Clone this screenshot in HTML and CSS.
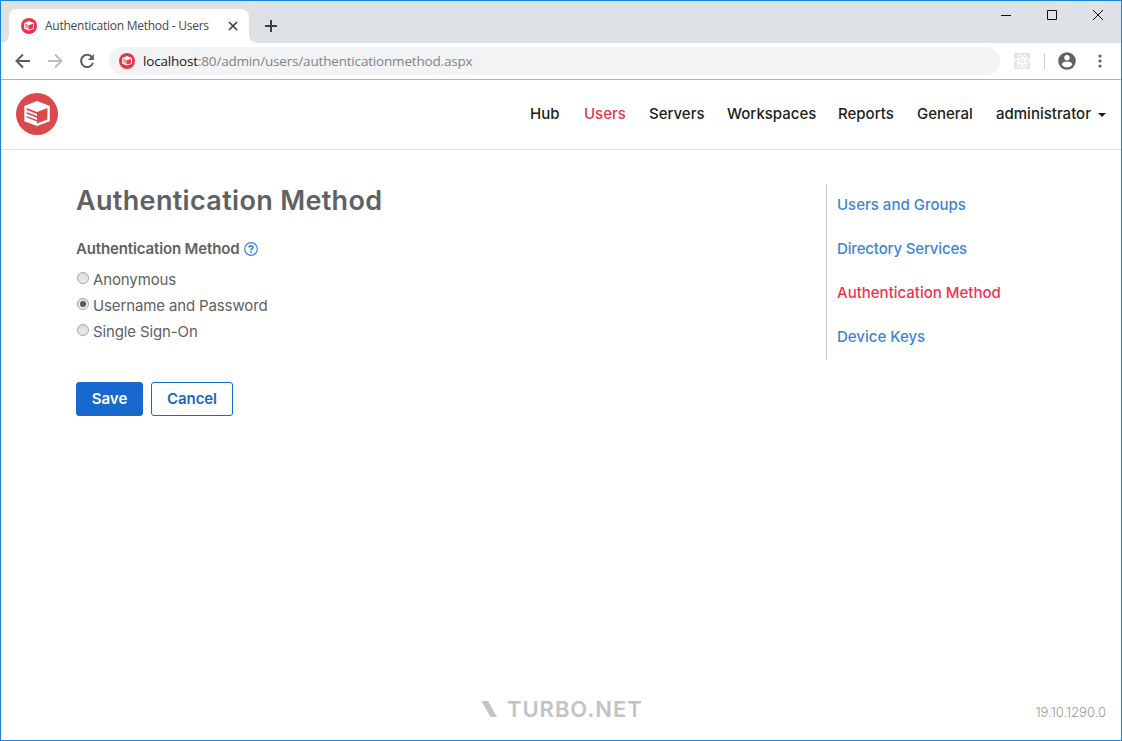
FILE: index.html
```html
<!DOCTYPE html>
<html lang="en">
<head>
<meta charset="utf-8">
<title>Authentication Method - Users</title>
<link rel="stylesheet" href="styles.css">
</head>
<body>
<svg class="defs" width="0" height="0" aria-hidden="true">
  <symbol id="cube" viewBox="0 0 42 42">
    <circle cx="21" cy="21" r="21" fill="currentColor"/>
    <path fill="#fff" d="M21 8 33.800 13V28.200L21 33 8.300 28.200V13Z"/>
    <path fill="currentColor" d="M21 18.900 31.400 14.900V26.600L21 30.500ZM10.700 14.900 21 18.900V20.900L10.700 16.900ZM10.700 19 21 23V24.700L10.700 20.700ZM10.700 22.900 21 26.900V28.600L10.700 24.600Z"/>
  </symbol>
</svg>
<div class="window">
  <div class="titlebar">
    <div class="tab">
      <svg class="favicon"><use href="#cube"/></svg>
      <span class="tab-title">Authentication Method - Users</span>
      <svg class="tab-close" width="10" height="10" viewBox="0 0 10 10"><path d="M1 1 9 9M9 1 1 9"/></svg>
    </div>
    <svg class="new-tab" width="12" height="12" viewBox="0 0 12 12"><path d="M6 0V12M0 6H12"/></svg>
    <div class="controls">
      <svg width="10" height="10" viewBox="0 0 10 10"><path d="M0 5.500H10"/></svg>
      <svg width="10" height="10" viewBox="0 0 10 10"><path d="M.5.5H9.500V9.500H.5Z"/></svg>
      <svg width="10" height="10" viewBox="0 0 10 10"><path d="M0 0 10 10M10 0 0 10"/></svg>
    </div>
  </div>
  <div class="toolbar">
    <svg class="nav-icon" width="16" height="16" viewBox="0 0 16 16"><path d="M15 8H2M8 1.500 1.500 8 8 14.500"/></svg>
    <svg class="nav-icon nav-off" width="16" height="16" viewBox="0 0 16 16"><path d="M1 8H14M8 1.500 14.500 8 8 14.500"/></svg>
    <svg class="nav-icon" width="16" height="16" viewBox="0 0 16 16"><path d="M13 4.200A6.100 6.100 0 1 0 14 9.800"/><path class="solid" d="M14.900 1V7H8.900Z"/></svg>
    <div class="address">
      <svg class="favicon"><use href="#cube"/></svg>
      <span class="url"><b>localhost</b>:80/admin/users/authenticationmethod.aspx</span>
    </div>
    <svg class="extension" width="16" height="16" viewBox="0 0 16 16"><path fill="#e4e4e4" d="M0 0H16V16H0Z"/><g fill="none" stroke="#fff" stroke-width="1.100"><ellipse cx="8" cy="8" rx="6.800" ry="2.600"/><ellipse cx="8" cy="8" rx="6.800" ry="2.600" transform="rotate(60 8 8)"/><ellipse cx="8" cy="8" rx="6.800" ry="2.600" transform="rotate(120 8 8)"/></g><circle cx="8" cy="8" r="1.300" fill="#fff"/></svg>
    <span class="divider"></span>
    <svg class="profile" width="18" height="18" viewBox="0 0 18 18"><circle cx="9" cy="9" r="8.800" fill="#5f6368"/><circle cx="9" cy="5.700" r="2.700" fill="#fff"/><path fill="#fff" d="M3.700 12.400C4.200 10.200 7 9.600 9 9.600S13.800 10.200 14.300 12.400C13 14.400 11 15.300 9 15.300S5 14.400 3.700 12.400Z"/></svg>
    <svg class="menu" width="4" height="14" viewBox="0 0 4 14"><circle cx="2" cy="2" r="1.600"/><circle cx="2" cy="7" r="1.600"/><circle cx="2" cy="12" r="1.600"/></svg>
  </div>
  <header class="header">
    <svg class="logo"><use href="#cube"/></svg>
    <nav class="main-nav">
      <a>Hub</a><a class="active">Users</a><a>Servers</a><a>Workspaces</a><a>Reports</a><a>General</a>
      <a class="account">administrator<i class="caret"></i></a>
    </nav>
  </header>
  <div class="content">
    <main class="form">
      <h1>Authentication Method</h1>
      <div class="label"><span>Authentication Method</span>
        <svg width="14" height="14" viewBox="0 0 14 14"><circle cx="7" cy="7" r="6.300" fill="none" stroke="#3b86d8" stroke-width="1.200"/><path fill="none" stroke="#3b86d8" stroke-width="1.600" d="M5 5.600C5 3.300 9 3.300 9 5.400 9 6.800 7 6.700 7 8.400M7 9.300V10.900"/></svg>
      </div>
      <div class="option"><i class="radio"></i><span>Anonymous</span></div>
      <div class="option"><i class="radio checked"></i><span>Username and Password</span></div>
      <div class="option"><i class="radio"></i><span>Single Sign-On</span></div>
      <div class="actions"><button class="save">Save</button><button class="cancel">Cancel</button></div>
    </main>
    <aside class="side">
      <a>Users and Groups</a><a class="services">Directory Services</a><a class="active">Authentication Method</a><a>Device Keys</a>
    </aside>
  </div>
  <footer class="footer">
    <div class="brand">
      <svg width="16" height="16" viewBox="0 0 16 16"><path fill="#c3c3c3" d="M.5 0H7L16 16H9.500Z"/></svg>
      <span>TURBO.NET</span>
    </div>
    <span class="version">19.10.1290.0</span>
  </footer>
</div>
</body>
</html>
```
FILE: styles.css
```css
* { box-sizing: border-box; }
body { margin: 0; background: #fff; font-family: Inter, "Open Sans", sans-serif; color: #606164; }
.defs { position: absolute; }
.window { width: 1122px; height: 741px; border: 1px solid #1883d7; display: flex; flex-direction: column; }
.titlebar { height: 42px; background: #dee1e6; display: flex; align-items: flex-start; }
.tab { width: 240px; height: 34px; margin: 8px 0 0 8px; padding: 0 11px 0 12px; background: #fff; border-radius: 8px 8px 0 0; display: flex; align-items: center; position: relative; }
.tab::before, .tab::after { content: ""; position: absolute; bottom: 0; width: 8px; height: 8px; }
.tab::before { left: -8px; background: radial-gradient(circle at 0 0, #dee1e6 7.500px, #fff 8px); }
.tab::after { right: -8px; background: radial-gradient(circle at 100% 0, #dee1e6 7.500px, #fff 8px); }
.favicon { width: 16px; height: 16px; color: #ee3348; flex: none; }
.tab-title { margin-left: 8px; width: 183px; font: 12px/16px "Open Sans", sans-serif; letter-spacing: -.25px; color: #45484c; white-space: nowrap; }
.tab-close { stroke: #3c4043; stroke-width: 1.700; flex: none; }
.new-tab { margin: 19px 0 0 16px; stroke: #3c4043; stroke-width: 2; }
.controls { margin: 9px 18px 0 auto; display: flex; gap: 36px; fill: none; stroke: #111; stroke-width: 1; }
.toolbar { height: 37px; border-bottom: 1px solid #b1b3b5; display: flex; align-items: center; padding: 0 19px 0 14px; }
.nav-icon { fill: none; stroke: #5a5e63; stroke-width: 2; margin-right: 16px; flex: none; }
.nav-icon .solid { fill: #5a5e63; stroke: none; }
.nav-off { stroke: #bcbdbf; }
.address { width: 891px; height: 28px; margin-left: -2px; padding-left: 10px; border-radius: 14px; background: #f1f3f4; display: flex; align-items: center; gap: 8px; }
.url { font: 13.500px/20px "Open Sans", sans-serif; color: #80848a; white-space: nowrap; letter-spacing: -.18px; }
.url b { font-weight: 400; color: #202124; }
.extension { margin-left: 14px; }
.divider { width: 1px; height: 16px; background: #cbccce; margin: 0 13px 0 14px; }
.profile { flex: none; }
.menu { margin-left: auto; fill: #5f6368; }
.header { height: 70px; border-bottom: 1px solid #e1e1e1; display: flex; align-items: center; justify-content: space-between; padding: 0 15px; }
.logo { width: 42px; height: 42px; color: #dc494b; margin-top: -1px; }
.main-nav { margin-top: -2px; display: grid; grid-template-columns: 54px 65px 78px 111px 79px 79px 110px; font-size: 15px; font-weight: 500; line-height: 20px; color: #1c1d20; white-space: nowrap; }
.main-nav .active, .side .active { color: #ee3350; }
.account { display: flex; align-items: center; justify-content: space-between; }
.caret { border: 4px solid transparent; border-top-color: #1c1d20; border-bottom: 0; margin-top: 3px; }
.content { flex: 1; display: flex; align-items: flex-start; padding: 34px 0 0 75px; }
.form { width: 750px; }
h1 { margin: 0; font-size: 27px; font-weight: 600; line-height: 34px; letter-spacing: .33px; }
.label { margin-top: 20px; height: 22px; display: flex; align-items: center; gap: 5px; font-size: 15px; font-weight: 600; line-height: 22px; letter-spacing: -.14px; }
.option { height: 26px; display: flex; align-items: center; gap: 4px; font-size: 15px; line-height: 26px; letter-spacing: -.13px; }
.label + .option { margin-top: 7px; }
.radio { width: 12px; height: 12px; margin: -4px 0 0 1px; border: 1px solid #a5a5a5; border-radius: 50%; background: linear-gradient(#dcdcdc, #eee); display: grid; place-items: center; }
.checked::after { content: ""; width: 6px; height: 6px; border-radius: 50%; background: #5a5a5a; }
.actions { margin-top: 37px; display: flex; gap: 8px; }
button { height: 34px; padding: 0; border: 1px solid #1769cf; border-radius: 3px; font: 600 15px/20px Inter, sans-serif; }
.save { width: 67px; color: #fff; background: #1769cf; }
.cancel { width: 82px; color: #1d66c5; background: #fff; letter-spacing: -.1px; }
.side { height: 176px; border-left: 1px solid #ccc; padding-left: 10px; display: grid; grid-template-rows: repeat(4, 44px); font-size: 15px; font-weight: 500; line-height: 42px; color: #3b86d8; white-space: nowrap; }
.services { letter-spacing: -.15px; }
.footer { height: 60px; display: flex; justify-content: space-between; padding: 18px 15px 0 480px; }
.brand { display: flex; align-items: center; gap: 10px; height: 22px; color: #c3c3c3; font: 600 22px/22px Inter, sans-serif; letter-spacing: .95px; }
.version { margin-top: 5px; font-size: 13px; font-weight: 300; line-height: 18px; color: #999; }
```
